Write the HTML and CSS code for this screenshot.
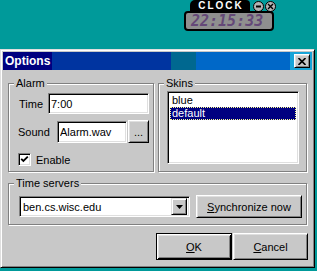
FILE: index.html
```html
<!DOCTYPE html>
<html lang="en">
<head>
    <meta charset="UTF-8">
    <meta name="viewport" content="width=device-width, initial-scale=1.0">
    <title>Options</title>
    <link rel="stylesheet" href="styles.css">
</head>
<body>

    <div class="desktop">
        <div class="clock">
            <div class="clock-top">
                <div class="clock-tab">CLOCK</div>
                <span class="clock-btn first">
                    <svg width="7" height="7" viewBox="0 0 7 7"><line x1="1" y1="3.5" x2="6" y2="3.5" stroke="#000" stroke-width="2"/></svg>
                </span>
                <span class="clock-btn">
                    <svg width="7" height="7" viewBox="0 0 7 7"><path d="M1 1 L6 6 M6 1 L1 6" stroke="#000" stroke-width="1.4"/></svg>
                </span>
            </div>
            <div class="clock-face">22:15:33</div>
        </div>
    </div>

    <div class="window">
        <div class="titlebar">
            <span class="title">Options</span>
            <span class="close-btn">
                <svg width="8" height="7" viewBox="0 0 8 7"><path d="M0.5 0 L7.5 7 M7.5 0 L0.5 7" stroke="#000" stroke-width="1.6"/></svg>
            </span>
        </div>

        <div class="client">
            <div class="groups-row">
                <fieldset class="group alarm">
                    <legend>Alarm</legend>
                    <div class="alarm-body">
                        <div class="field-row">
                            <label class="lbl-time" for="time-input">Time</label>
                            <input type="text" id="time-input" class="textbox time-box" value="7:00">
                        </div>
                        <div class="field-row sound-row">
                            <label class="lbl-sound" for="sound-input">Sound</label>
                            <input type="text" id="sound-input" class="textbox sound-box" value="Alarm.wav">
                            <span class="button browse-btn">...</span>
                        </div>
                        <div class="check-row">
                            <span class="checkbox">
                                <svg width="9" height="9" viewBox="0 0 9 9"><path d="M1.2 3.8 L3.4 6 L7.8 1.6" stroke="#000" stroke-width="1.8" fill="none"/></svg>
                            </span>
                            <span class="check-label">Enable</span>
                        </div>
                    </div>
                </fieldset>

                <fieldset class="group skins">
                    <legend>Skins</legend>
                    <div class="skins-body">
                        <div class="listbox">
                            <div class="list-item">blue</div>
                            <div class="list-item selected">default</div>
                        </div>
                    </div>
                </fieldset>
            </div>

            <fieldset class="group servers">
                <legend>Time servers</legend>
                <div class="servers-body">
                    <div class="combo">
                        <span class="combo-text">ben.cs.wisc.edu</span>
                        <span class="combo-arrow">
                            <svg width="7" height="4" viewBox="0 0 7 4"><path d="M0 0 H7 L3.5 4 Z" fill="#000"/></svg>
                        </span>
                    </div>
                    <span class="button sync-btn"><u>S</u>ynchronize now</span>
                </div>
            </fieldset>

            <div class="dialog-buttons">
                <span class="button ok-btn"><u>O</u>K</span>
                <span class="button cancel-btn"><u>C</u>ancel</span>
            </div>
        </div>
    </div>

</body>
</html>
```

FILE: styles.css
```css
body {
    margin: 0;
    width: 317px;
    height: 271px;
    overflow: hidden;
    background-color: #009a9a;
    font-family: "Liberation Sans", Arial, sans-serif;
    font-size: 11px;
    color: #000;
}

/* horloge en haut */
.desktop {
    height: 49px;
    display: flex;
}
.clock {
    margin-left: 184px;
    display: flex;
    flex-direction: column;
}
.clock-top {
    display: flex;
    align-items: flex-start;
    height: 11px;
}
.clock-tab {
    margin-left: 6px;
    width: 60px;
    height: 11px;
    background-color: #000;
    color: #fff;
    font-weight: bold;
    font-size: 10px;
    line-height: 11px;
    letter-spacing: 2px;
    text-indent: 2px;
    text-align: center;
    border-radius: 5px 4px 0 0;
}
.clock-btn {
    width: 9px;
    height: 9px;
    margin-top: 1px;
    margin-left: 1px;
    border: 1px solid #000;
    border-radius: 50%;
    background-color: #b4b4b4;
    display: flex;
    align-items: center;
    justify-content: center;
}
.clock-btn.first {
    margin-left: 3px;
}
.clock-face {
    width: 90px;
    height: 20px;
    box-sizing: border-box;
    border: 2px solid #000;
    border-radius: 4px;
    background-color: #8f8f8f;
    padding-left: 5px;
    font-family: "DejaVu Sans Mono", monospace;
    font-style: italic;
    font-weight: bold;
    font-size: 15px;
    line-height: 16px;
    color: #644878;
}

/* fenetre */
.window {
    width: 315px;
    height: 219px;
    box-sizing: border-box;
    padding: 2px;
    background-color: #c8c8c8;
    border: 1px solid;
    border-color: #dfdfdf #000 #000 #dfdfdf;
    box-shadow: inset 1px 1px #fff, inset -1px -1px #808080;
}
.titlebar {
    height: 18px;
    display: flex;
    align-items: center;
    justify-content: space-between;
    padding: 0 2px;
    background: linear-gradient(to right,
        #000080 0, #000080 16%,
        #0034a0 16%, #0034a0 54.5%,
        #006890 54.5%, #006890 62.5%,
        #0068c8 62.5%, #0068c8 93%,
        #18a4d8 93%, #18a4d8 100%);
}
.title {
    color: #fff;
    font-weight: bold;
    font-size: 12px;
}
.close-btn {
    width: 16px;
    height: 14px;
    box-sizing: border-box;
    display: flex;
    align-items: center;
    justify-content: center;
    background-color: #c8c8c8;
    border: 1px solid;
    border-color: #fff #000 #000 #fff;
    box-shadow: inset 1px 1px #dfdfdf, inset -1px -1px #808080;
}

.client {
    padding: 7px 5px 0 5px;
}
.groups-row {
    display: flex;
    gap: 4px;
}

/* cadres */
.group {
    margin: 0;
    padding: 0;
    min-width: 0;
    box-sizing: border-box;
    border: 1px solid #808080;
    box-shadow: inset 1px 1px #fff, 1px 1px #fff;
}
.group legend {
    margin-left: 5px;
    padding: 0 2px;
    line-height: 13px;
    background-color: #c8c8c8;
}
.alarm {
    width: 146px;
    height: 95px;
}
.skins {
    width: 149px;
    height: 95px;
}
.servers {
    margin-top: 5px;
    width: 299px;
    height: 48px;
}

/* champs */
.textbox {
    margin: 0;
    box-sizing: border-box;
    padding: 0 2px;
    font-family: "Liberation Sans", Arial, sans-serif;
    font-size: 11px;
    color: #000;
    background-color: #fff;
    border: 1px solid;
    border-color: #808080 #fff #fff #808080;
    box-shadow: inset 1px 1px #000, inset -1px -1px #dfdfdf;
    outline: none;
}
.button {
    box-sizing: border-box;
    display: flex;
    align-items: center;
    justify-content: center;
    background-color: #c8c8c8;
    border: 1px solid;
    border-color: #fff #000 #000 #fff;
    box-shadow: inset 1px 1px #dfdfdf, inset -1px -1px #808080;
}

.alarm-body {
    padding: 3px 4px 0 10px;
}
.field-row {
    display: flex;
    align-items: center;
}
.lbl-time {
    width: 29px;
}
.time-box {
    width: 101px;
    height: 21px;
}
.sound-row {
    margin-top: 6px;
}
.lbl-sound {
    width: 38px;
    margin-left: -1px;
    padding-right: 1px;
}
.sound-box {
    width: 70px;
    height: 22px;
}
.browse-btn {
    margin-left: 1px;
    width: 21px;
    height: 23px;
    line-height: 10px;
}
.check-row {
    margin-top: 10px;
    display: flex;
    align-items: center;
}
.checkbox {
    margin-left: -1px;
    width: 13px;
    height: 13px;
    box-sizing: border-box;
    display: flex;
    align-items: center;
    justify-content: center;
    background-color: #fff;
    border: 1px solid;
    border-color: #808080 #fff #fff #808080;
    box-shadow: inset 1px 1px #000, inset -1px -1px #dfdfdf;
}
.check-label {
    margin-left: 5px;
}

/* liste des skins */
.skins-body {
    padding: 1px 0 0 8px;
}
.listbox {
    width: 132px;
    height: 73px;
    box-sizing: border-box;
    padding: 2px;
    background-color: #fff;
    border: 1px solid;
    border-color: #808080 #fff #fff #808080;
    box-shadow: inset 1px 1px #000, inset -1px -1px #dfdfdf;
}
.list-item {
    height: 13px;
    line-height: 13px;
    padding-left: 2px;
}
.list-item.selected {
    background-color: #000080;
    color: #fff;
    outline: 1px dotted #ffff90;
    outline-offset: -1px;
}

/* serveurs */
.servers-body {
    padding: 5px 0 0 10px;
    display: flex;
    align-items: center;
}
.combo {
    width: 171px;
    height: 21px;
    box-sizing: border-box;
    padding: 2px;
    display: flex;
    align-items: center;
    justify-content: space-between;
    background-color: #fff;
    border: 1px solid;
    border-color: #808080 #fff #fff #808080;
    box-shadow: inset 1px 1px #000, inset -1px -1px #dfdfdf;
}
.combo-text {
    padding-left: 1px;
}
.combo-arrow {
    width: 16px;
    height: 17px;
    box-sizing: border-box;
    display: flex;
    align-items: center;
    justify-content: center;
    background-color: #c8c8c8;
    border: 1px solid;
    border-color: #dfdfdf #000 #000 #dfdfdf;
    box-shadow: inset 1px 1px #fff, inset -1px -1px #808080;
}
.sync-btn {
    margin-left: 6px;
    width: 106px;
    height: 23px;
}

/* OK / Annuler */
.dialog-buttons {
    margin-top: 8px;
    margin-right: -1px;
    display: flex;
    justify-content: flex-end;
    gap: 1px;
}
.ok-btn,
.cancel-btn {
    width: 75px;
    height: 27px;
}
.ok-btn {
    width: 76px;
    border: 1px solid #000;
    box-shadow: inset 1px 1px #fff, inset -1px -1px #000, inset 2px 2px #dfdfdf, inset -2px -2px #808080;
}
```
